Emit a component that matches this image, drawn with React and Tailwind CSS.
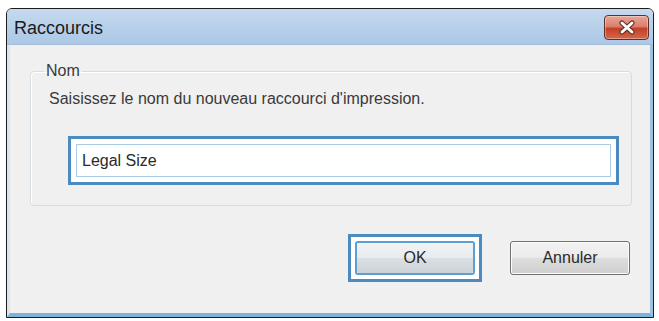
import React from "react";

function CloseButton() {
  return (
    <div className="w-[45px] h-[25px] mt-[6px] mr-[4px] rounded-[4px] border border-[#5e3029] bg-[linear-gradient(#e9a697_0%,#db7f6b_45%,#c43f26_55%,#d4694b_100%)] flex items-center justify-center shadow-[inset_0_0_0_1px_rgba(255,255,255,0.35)]">
      <svg width="18" height="15" viewBox="0 0 18 15">
        <path
          d="M4 3 L14 12 M14 3 L4 12"
          stroke="#5b2a20"
          strokeWidth="5"
          strokeLinecap="round"
        />
        <path
          d="M4 3 L14 12 M14 3 L4 12"
          stroke="#ffffff"
          strokeWidth="3"
          strokeLinecap="round"
        />
      </svg>
    </div>
  );
}

function Button({ children, focused }) {
  const btn = (
    <div className="w-[120px] h-[34px] rounded-[3px] border border-[#707070] bg-[linear-gradient(#f2f2f2_0%,#ebebeb_48%,#dddddd_52%,#cfcfcf_100%)] shadow-[inset_0_0_0_1px_#fcfcfc] flex items-center justify-center text-[16px] text-[#2a2a2a]">
      {children}
    </div>
  );
  if (!focused) return btn;
  return (
    <div className="border-[3px] border-[#4b8bc0] bg-white p-[4px]">
      <div className="rounded-[3px] border-2 border-[#5d9fd0]">
        <div className="w-[116px] h-[30px] rounded-[2px] bg-[linear-gradient(#f1f3f5_0%,#e9ecee_48%,#dadfe3_52%,#ccd3d8_100%)] flex items-center justify-center text-[16px] text-[#2a2a2a]">
          {children}
        </div>
      </div>
    </div>
  );
}

export default function App() {
  return (
    <div
      className="w-[659px] h-[321px] bg-white pt-[8px] pl-[6px]"
      style={{ fontFamily: '"Liberation Sans", Arial, sans-serif' }}
    >
      <div className="w-[648px] h-[310px] border border-[#1c1c1c] rounded-t-[6px] flex flex-col overflow-hidden">
        {/* barre de titre */}
        <div className="h-[36px] flex justify-between bg-[linear-gradient(#c5d9ee,#abc8e6)] border-b border-[#a2bcd8]">
          <div className="pl-[7px] pt-[9px] text-[18px] leading-[20px] text-[#1a1a1a]">
            Raccourcis
          </div>
          <CloseButton />
        </div>

        {/* contenu */}
        <div className="flex-1 flex flex-col bg-[#f0f0f0] border-l-[3px] border-l-[#dbe5ef] border-r-[3px] border-r-[#9ec3e0] border-b-[4px] border-b-[#7fb3d9]">
          <fieldset className="mt-[16px] ml-[20px] mr-[18px] h-[145px] border border-[#d5dde3] rounded-[4px] px-[18px] shadow-[inset_1px_1px_0_#ffffff]">
            <legend className="ml-[-5px] px-[2px] text-[16px] leading-[20px] text-[#3a3a3a]">
              Nom
            </legend>
            <div className="mt-[8px] text-[16px] leading-[20px] text-[#3a3a3a]">
              Saisissez le nom du nouveau raccourci d'impression.
            </div>
            <div className="mt-[27px] ml-[19px] mr-[-6px] border-[3px] border-[#4b8bc0] bg-white p-[5px]">
              <div className="h-[33px] border border-[#a9cbe4] bg-white flex items-center pl-[5px] text-[16px] text-[#2a2a2a]">
                Legal Size
              </div>
            </div>
          </fieldset>

          <div className="mt-[28px] mr-[20px] flex justify-end items-center gap-[28px]">
            <Button focused>OK</Button>
            <Button>Annuler</Button>
          </div>
        </div>
      </div>
    </div>
  );
}
